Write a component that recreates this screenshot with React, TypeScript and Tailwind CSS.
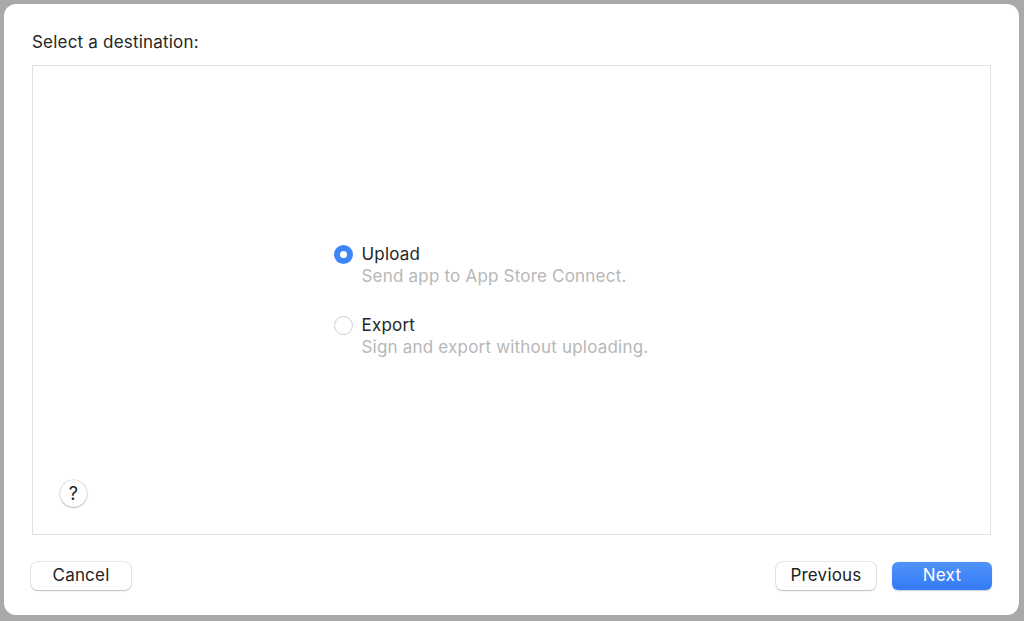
import React from 'react';

const options = [
  { id: 'upload', label: 'Upload', hint: 'Send app to App Store Connect.' },
  { id: 'export', label: 'Export', hint: 'Sign and export without uploading.' },
];

export default function App() {
  const [selected, setSelected] = React.useState('upload');

  return (
    <div className="w-[1024px] h-[621px] bg-[#a9a9a9] pt-[4px] pl-[4px] pr-[5px] pb-[6px] flex font-['Inter','Liberation_Sans',sans-serif] tracking-[0.2px] text-[#262626]">
      <div className="flex-1 bg-white rounded-[12px] flex flex-col px-[28px] pt-[28px] pb-[25px]">
        <div className="text-[17px] leading-[20px] mb-[13px]">Select a destination:</div>

        {/* Destination panel */}
        <div className="flex-1 border border-[#e3e3e3] flex flex-col">
          <div className="flex-1 flex items-center justify-center pt-[75px]">
            <div className="w-[356px] flex flex-col gap-[27px]">
              {options.map((o) => (
                <button key={o.id} onClick={() => setSelected(o.id)} className="flex items-start gap-[9px] text-left">
                  {selected === o.id ? (
                    <span className="mt-[2px] w-[19px] h-[19px] rounded-full bg-[#3d86f7] flex items-center justify-center shrink-0">
                      <span className="w-[7px] h-[7px] rounded-full bg-white" />
                    </span>
                  ) : (
                    <span className="mt-[2px] w-[19px] h-[19px] rounded-full bg-white border border-[#cfcfcf] shrink-0" />
                  )}
                  <span className="flex flex-col">
                    <span className="text-[17px] leading-[22px] text-[#262626]">{o.label}</span>
                    <span className="text-[17px] leading-[22px] text-[#b7b7b7]">{o.hint}</span>
                  </span>
                </button>
              ))}
            </div>
          </div>
          <div className="pl-[27px] pb-[27px] pt-[20px]">
            <button className="w-[27px] h-[27px] rounded-full bg-white shadow-[0_0_0_0.5px_rgba(0,0,0,0.18),0_1px_1.5px_rgba(0,0,0,0.2)] flex items-center justify-center text-[18px] leading-none text-[#222]">
              ?
            </button>
          </div>
        </div>

        {/* Footer buttons */}
        <div className="mt-[27px] flex items-center">
          <button className="-ml-[1px] w-[100px] h-[28px] rounded-[6px] bg-white shadow-[0_0_0_0.5px_rgba(0,0,0,0.18),0_1px_1.5px_rgba(0,0,0,0.18)] text-[17px] text-[#222]">
            Cancel
          </button>
          <div className="flex-1" />
          <button className="w-[100px] h-[28px] rounded-[6px] bg-white shadow-[0_0_0_0.5px_rgba(0,0,0,0.18),0_1px_1.5px_rgba(0,0,0,0.18)] text-[17px] text-[#222]">
            Previous
          </button>
          <button className="ml-[16px] -mr-[1px] w-[100px] h-[28px] rounded-[6px] bg-gradient-to-b from-[#4f93f9] to-[#3479f6] shadow-[0_0.5px_1.5px_rgba(0,0,0,0.2)] text-[17px] text-white">
            Next
          </button>
        </div>
      </div>
    </div>
  );
}
